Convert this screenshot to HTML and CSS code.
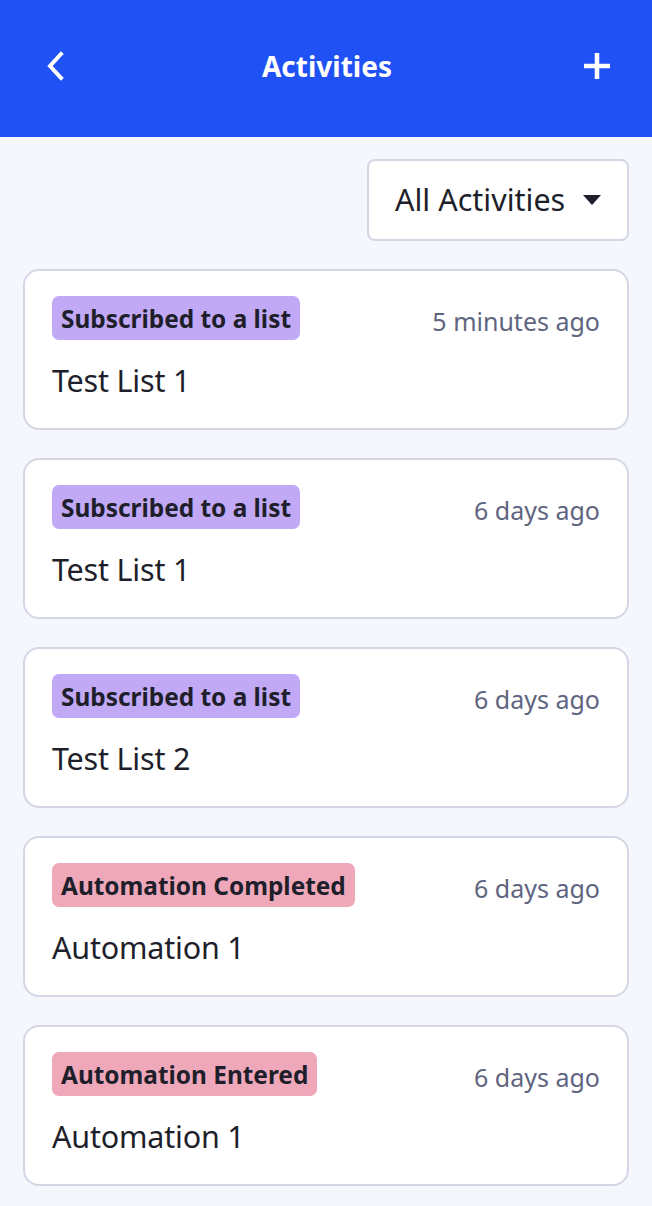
FILE: index.html
```html
<!DOCTYPE html>
<html lang="en">
<head>
<meta charset="utf-8">
<title>Activities</title>
<link rel="stylesheet" href="styles.css">
</head>
<body>
<header class="topbar">
  <button class="icon-btn back" aria-label="Back">
    <svg width="24" height="32" viewBox="0 0 24 32"><path d="M16 4 L5 16 L16 28" fill="none" stroke="#fff" stroke-width="4" stroke-linecap="square"/></svg>
  </button>
  <h1 class="title">Activities</h1>
  <button class="icon-btn add" aria-label="Add">
    <svg width="28" height="28" viewBox="0 0 28 28"><path d="M14 1 V27 M1 14 H27" fill="none" stroke="#fff" stroke-width="4.5"/></svg>
  </button>
</header>
<main class="content">
  <div class="filter-row">
    <button class="dropdown">All Activities <span class="caret"></span></button>
  </div>
  <ul class="list">
    <li class="card">
      <div class="card-top"><span class="badge badge-list">Subscribed to a list</span><span class="time">5 minutes ago</span></div>
      <div class="name">Test List 1</div>
    </li>
    <li class="card">
      <div class="card-top"><span class="badge badge-list">Subscribed to a list</span><span class="time">6 days ago</span></div>
      <div class="name">Test List 1</div>
    </li>
    <li class="card">
      <div class="card-top"><span class="badge badge-list">Subscribed to a list</span><span class="time">6 days ago</span></div>
      <div class="name">Test List 2</div>
    </li>
    <li class="card">
      <div class="card-top"><span class="badge badge-auto">Automation Completed</span><span class="time">6 days ago</span></div>
      <div class="name">Automation 1</div>
    </li>
    <li class="card">
      <div class="card-top"><span class="badge badge-auto">Automation Entered</span><span class="time">6 days ago</span></div>
      <div class="name">Automation 1</div>
    </li>
  </ul>
</main>
</body>
</html>
```

FILE: styles.css
```css
* { box-sizing: border-box; }
body {
  margin: 0;
  background: #f5f7fd;
  font-family: "Noto Sans", "Liberation Sans", sans-serif;
  color: #1e1f2b;
}
.topbar {
  height: 137px;
  background: #1f51f5;
  display: flex;
  align-items: center;
  justify-content: space-between;
  padding: 0 41px 5px 43px;
}
.icon-btn {
  background: none;
  border: 0;
  padding: 0;
  width: 28px;
  height: 32px;
  display: flex;
  align-items: center;
  justify-content: center;
}
.title {
  margin: 0;
  color: #fff;
  font-size: 28px;
  font-weight: 700;
}
.content {
  padding: 22px 23px 20px 23px;
}
.filter-row {
  display: flex;
  justify-content: flex-end;
}
.dropdown {
  width: 262px;
  height: 82px;
  background: #fff;
  border: 2px solid #d4d6e4;
  border-radius: 8px;
  font-family: inherit;
  font-size: 30.5px;
  color: #1e1f2b;
  display: flex;
  align-items: center;
  justify-content: space-between;
  padding: 0 26px 3px 26px;
}
.caret {
  width: 0;
  height: 0;
  margin-top: 3px;
  border-left: 9.5px solid transparent;
  border-right: 9.5px solid transparent;
  border-top: 10px solid #1e1f2b;
}
.list {
  list-style: none;
  margin: 28px 0 0 0;
  padding: 0;
  display: flex;
  flex-direction: column;
  gap: 28px;
}
.card {
  height: 161px;
  background: #fff;
  border: 2px solid #d4d6e4;
  border-radius: 16px;
  padding: 25px 27px 0 27px;
}
.card-top {
  display: flex;
  justify-content: space-between;
  align-items: center;
}
.badge {
  height: 44px;
  display: inline-flex;
  align-items: center;
  padding: 0 9px;
  border-radius: 7px;
  font-size: 24.4px;
  font-weight: 700;
  color: #1e1f2b;
}
.badge-list { background: #c1a9f5; }
.badge-auto { background: #efa8ba; }
.time {
  margin-top: 6px;
  font-size: 25px;
  color: #5f6580;
}
.name {
  margin-top: 22px;
  font-size: 30.5px;
  line-height: 36px;
  letter-spacing: -0.2px;
}
```
